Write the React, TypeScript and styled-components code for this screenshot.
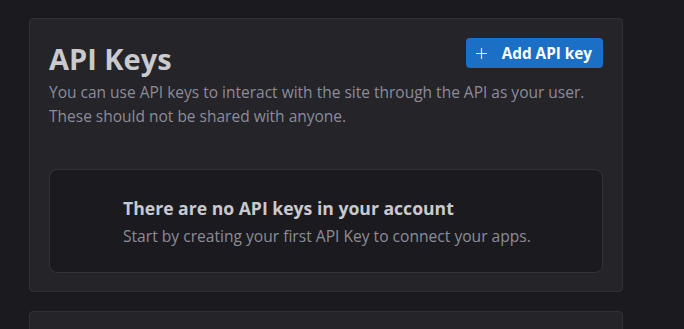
import React from "react";
import styled, { createGlobalStyle } from "styled-components";

const Global = createGlobalStyle`
  html, body { margin: 0; padding: 0; background: #1b1b1f; }
  body { font-family: "Open Sans", "Noto Sans", sans-serif; }
  * { box-sizing: border-box; }
`;

const Page = styled.div`
  padding: 18px 61px 0 29px;
  display: flex;
  flex-direction: column;
  gap: 19px;
  height: 329px;
  overflow: hidden;
`;

const Card = styled.section<{ $h?: number }>`
  background: #242429;
  border: 1px solid #303036;
  border-radius: 4px;
  padding: 19px 19px 18px 19px;
  width: 594px;
  flex-shrink: 0;
  ${(p) => (p.$h ? `height: ${p.$h}px;` : "")}
`;

const Header = styled.div`
  display: flex;
  justify-content: space-between;
  align-items: flex-start;
`;

const Title = styled.h1`
  margin: 0;
  font-size: 29px;
  font-weight: 700;
  line-height: 42px;
  color: #c9c9ce;
`;

const AddButton = styled.button`
  display: flex;
  align-items: center;
  gap: 15px;
  height: 30px;
  padding: 0 11px 0 10px;
  background: #1b6fc5;
  border: none;
  border-radius: 4px;
  color: #ffffff;
  font-family: inherit;
  font-size: 15.3px;
  font-weight: 700;
  cursor: pointer;
`;

const Desc = styled.p`
  margin: 0;
  font-size: 15.5px;
  line-height: 24px;
  color: #8c8c99;
`;

const Empty = styled.div`
  margin-top: 41px;
  background: #1b1b1f;
  border: 1px solid #33333a;
  border-radius: 8px;
  height: 104px;
  padding: 26px 20px 0 73px;
`;

const EmptyTitle = styled.div`
  font-size: 17.6px;
  font-weight: 700;
  line-height: 24px;
  color: #c9c9ce;
`;

const EmptyText = styled.div`
  margin-top: 5px;
  font-size: 15.6px;
  line-height: 22px;
  color: #8c8c99;
`;

const Plus = () => (
  <svg width="11" height="11" viewBox="0 0 11 11" fill="none">
    <path d="M5.5 0v11M0 5.5h11" stroke="#dfe9f5" strokeWidth="1.2" />
  </svg>
);

export default function App() {
  return (
    <>
      <Global />
      <Page>
        <Card>
          <Header>
            <Title>API Keys</Title>
            <AddButton>
              <Plus />
              Add API key
            </AddButton>
          </Header>
          <Desc>
            You can use API keys to interact with the site through the API as your user.
            <br />
            These should not be shared with anyone.
          </Desc>
          <Empty>
            <EmptyTitle>There are no API keys in your account</EmptyTitle>
            <EmptyText>Start by creating your first API Key to connect your apps.</EmptyText>
          </Empty>
        </Card>
        <Card $h={60} />
      </Page>
    </>
  );
}
